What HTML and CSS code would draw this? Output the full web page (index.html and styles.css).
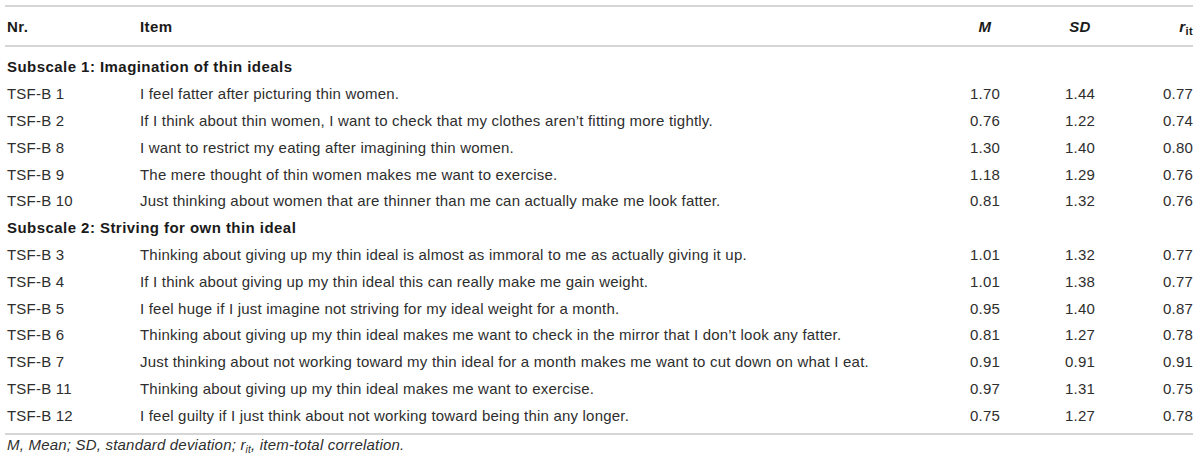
FILE: index.html
```html
<!DOCTYPE html>
<html>
<head>
<meta charset="utf-8">
<link rel="stylesheet" href="styles.css">
</head>
<body>
<div class="wrap">
<table class="tbl">
<colgroup>
<col class="c-nr"><col class="c-item"><col class="c-m"><col class="c-sd"><col class="c-rit">
</colgroup>
<thead>
<tr><th class="nr">Nr.</th><th class="item">Item</th><th class="num"><i>M</i></th><th class="num"><i>SD</i></th><th class="rit"><i>r</i><sub>it</sub></th></tr>
</thead>
<tbody>
<tr class="sub first"><td colspan="5">Subscale 1: Imagination of thin ideals</td></tr>
<tr><td class="nr">TSF-B 1</td><td>I feel fatter after picturing thin women.</td><td class="num">1.70</td><td class="num">1.44</td><td class="rit">0.77</td></tr>
<tr><td class="nr">TSF-B 2</td><td>If I think about thin women, I want to check that my clothes aren’t fitting more tightly.</td><td class="num">0.76</td><td class="num">1.22</td><td class="rit">0.74</td></tr>
<tr><td class="nr">TSF-B 8</td><td>I want to restrict my eating after imagining thin women.</td><td class="num">1.30</td><td class="num">1.40</td><td class="rit">0.80</td></tr>
<tr><td class="nr">TSF-B 9</td><td>The mere thought of thin women makes me want to exercise.</td><td class="num">1.18</td><td class="num">1.29</td><td class="rit">0.76</td></tr>
<tr><td class="nr">TSF-B 10</td><td>Just thinking about women that are thinner than me can actually make me look fatter.</td><td class="num">0.81</td><td class="num">1.32</td><td class="rit">0.76</td></tr>
<tr class="sub"><td colspan="5">Subscale 2: Striving for own thin ideal</td></tr>
<tr><td class="nr">TSF-B 3</td><td>Thinking about giving up my thin ideal is almost as immoral to me as actually giving it up.</td><td class="num">1.01</td><td class="num">1.32</td><td class="rit">0.77</td></tr>
<tr><td class="nr">TSF-B 4</td><td>If I think about giving up my thin ideal this can really make me gain weight.</td><td class="num">1.01</td><td class="num">1.38</td><td class="rit">0.77</td></tr>
<tr><td class="nr">TSF-B 5</td><td>I feel huge if I just imagine not striving for my ideal weight for a month.</td><td class="num">0.95</td><td class="num">1.40</td><td class="rit">0.87</td></tr>
<tr><td class="nr">TSF-B 6</td><td>Thinking about giving up my thin ideal makes me want to check in the mirror that I don’t look any fatter.</td><td class="num">0.81</td><td class="num">1.27</td><td class="rit">0.78</td></tr>
<tr><td class="nr">TSF-B 7</td><td>Just thinking about not working toward my thin ideal for a month makes me want to cut down on what I eat.</td><td class="num">0.91</td><td class="num">0.91</td><td class="rit">0.91</td></tr>
<tr><td class="nr">TSF-B 11</td><td>Thinking about giving up my thin ideal makes me want to exercise.</td><td class="num">0.97</td><td class="num">1.31</td><td class="rit">0.75</td></tr>
<tr class="last"><td class="nr">TSF-B 12</td><td>I feel guilty if I just think about not working toward being thin any longer.</td><td class="num">0.75</td><td class="num">1.27</td><td class="rit">0.78</td></tr>
</tbody>
</table>
<p class="note"><i>M</i>, Mean; <i>SD</i>, standard deviation; <i>r<sub>it</sub></i>, item-total correlation.</p>
</div>
</body>
</html>
```
FILE: styles.css
```css
html, body {
  margin: 0;
  padding: 0;
  background: #fff;
}
body {
  font-family: "Liberation Sans", Arial, sans-serif;
  font-size: 15px;
  color: #2e2e2e;
  letter-spacing: 0.2px;
}
.wrap {
  padding: 5px 7px 0 5px;
}
.tbl {
  width: 1188px;
  border-collapse: collapse;
  table-layout: fixed;
}
.c-nr { width: 135px; }
.c-m { width: 90px; }
.c-sd { width: 100px; }
.c-rit { width: 63px; }
.tbl thead th {
  border-top: 2px solid #d6d6d6;
  border-bottom: 2px solid #d6d6d6;
  height: 38px;
  padding: 0;
  font-weight: bold;
  color: #1a1a1a;
  letter-spacing: 0.4px;
  text-align: left;
  vertical-align: middle;
}
.tbl td {
  padding: 0;
  height: 26.8px;
  line-height: 18px;
  vertical-align: middle;
  white-space: nowrap;
}
.tbl th.nr, .tbl td.nr { padding-left: 2px; }
.tbl .sub td {
  font-weight: bold;
  color: #1a1a1a;
  letter-spacing: 0.45px;
  padding-left: 2px;
}
.tbl .first td { padding-top: 7px; }
.tbl .last td {
  padding-bottom: 4px;
  border-bottom: 2px solid #d6d6d6;
}
.tbl .num { text-align: center; }
.tbl .rit { text-align: right; }
.tbl th sub {
  font-style: normal;
  font-size: 11px;
  vertical-align: -3px;
  line-height: 0;
}
.note {
  margin: 1px 0 0 2px;
  font-style: italic;
  line-height: 17px;
}
.note sub {
  font-size: 10px;
  vertical-align: -3px;
  line-height: 0;
}
```
